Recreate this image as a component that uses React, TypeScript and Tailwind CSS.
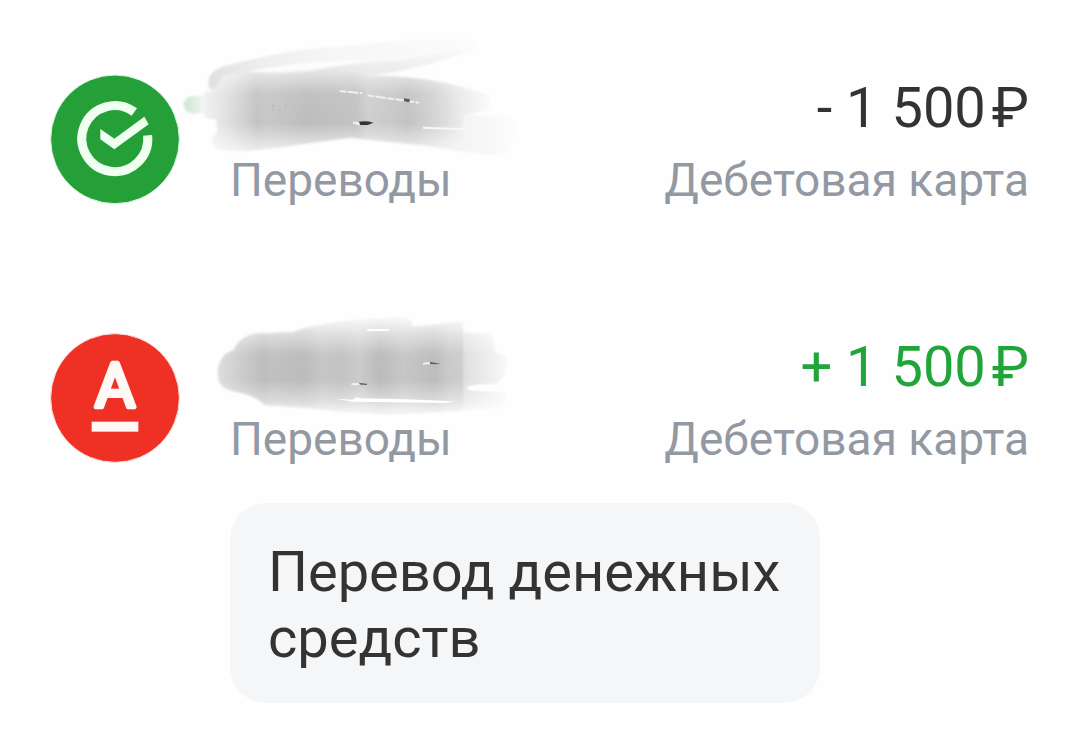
import type { ReactNode } from "react";

function CheckLogo() {
  return (
    <svg viewBox="0 0 450 465" className="size-full" aria-hidden="true">
      <circle cx="225" cy="238" r="193" fill="#25a038" stroke="#dcf8e0" strokeWidth="3" />
      <path d="M283 156A99 99 0 1 0 323 226" fill="none" stroke="#effff0" strokeWidth="27" />
      <path d="M181 207L223 236L313 170L326 193L223 268L181 238Z" fill="#effff0" />
    </svg>
  );
}

function AlfaLogo() {
  return (
    <svg viewBox="0 0 450 465" className="size-full" aria-hidden="true">
      <circle cx="225" cy="237" r="193" fill="#ee3124" stroke="#fbdcd8" strokeWidth="3" />
      <text
        x="225"
        y="263"
        textAnchor="middle"
        fontSize="184"
        className="font-['Roboto'] font-normal"
        fill="#fff9f6"
        stroke="#fff9f6"
        strokeWidth="14"
        strokeLinejoin="round"
      >
        А
      </text>
      <rect x="155" y="308" width="140" height="30" fill="#fff9f6" />
    </svg>
  );
}

function OutgoingSmudge() {
  return (
    <svg
      viewBox="0 0 1050 390"
      className="pointer-events-none absolute -top-[41px] -left-[51px] h-[130px] w-[350px]"
      aria-hidden="true"
    >
      <defs>
        <linearGradient id="outBody" gradientUnits="userSpaceOnUse" x1="70" y1="0" x2="940" y2="0">
          <stop offset="0" stopColor="#f1f2f1" />
          <stop offset="0.1" stopColor="#dcdcdc" />
          <stop offset="0.19" stopColor="#c2c2c2" />
          <stop offset="0.22" stopColor="#c6c6c6" />
          <stop offset="0.36" stopColor="#bcbcbc" />
          <stop offset="0.53" stopColor="#c1c1c1" />
          <stop offset="0.57" stopColor="#cecece" />
          <stop offset="0.65" stopColor="#c8c8c8" />
          <stop offset="0.71" stopColor="#c2c2c2" />
          <stop offset="0.8" stopColor="#d3d3d3" />
          <stop offset="0.9" stopColor="#ececec" />
          <stop offset="1" stopColor="#fcfcfc" />
        </linearGradient>
        <linearGradient id="outShade" x1="0" y1="0" x2="0" y2="1">
          <stop offset="0" stopColor="#fff" stopOpacity="0.6" />
          <stop offset="0.28" stopColor="#fff" stopOpacity="0.08" />
          <stop offset="0.65" stopColor="#fff" stopOpacity="0.02" />
          <stop offset="1" stopColor="#fff" stopOpacity="0.7" />
        </linearGradient>
        <linearGradient id="outTop" x1="0" y1="0" x2="1" y2="0">
          <stop offset="0" stopColor="#e0e0e0" />
          <stop offset="0.2" stopColor="#eeeeee" />
          <stop offset="0.5" stopColor="#f7f7f7" />
          <stop offset="1" stopColor="#fbfbfb" />
        </linearGradient>
        <linearGradient id="outBand" x1="0" y1="1" x2="1" y2="0">
          <stop offset="0" stopColor="#e2e2e2" />
          <stop offset="0.5" stopColor="#efefef" />
          <stop offset="1" stopColor="#fbfbfb" />
        </linearGradient>
        <linearGradient id="outTail" x1="0" y1="0" x2="1" y2="0">
          <stop offset="0" stopColor="#ececec" />
          <stop offset="1" stopColor="#fcfcfc" />
        </linearGradient>
        <linearGradient id="outGreen" x1="0" y1="0" x2="1" y2="0">
          <stop offset="0" stopColor="#cbe8d0" />
          <stop offset="1" stopColor="#f3f6f3" />
        </linearGradient>
        <filter id="outSoft">
          <feGaussianBlur stdDeviation="3" />
        </filter>
      </defs>
      <g filter="url(#outSoft)">
        <path
          d="M92 162C78 125 100 100 160 88C270 60 370 38 510 32C650 14 770 12 888 16Q894 40 884 48C780 84 680 112 560 128L205 130L130 168Z"
          fill="url(#outTop)"
        />
        <path d="M205 111C300 90 400 80 560 74C500 92 440 100 380 103C320 112 290 112 205 111Z" fill="#fdfdfd" />
        <path d="M360 120C440 92 520 88 640 78C720 68 800 50 884 42C780 84 680 108 560 122L450 128Z" fill="url(#outBand)" />
        <path d="M720 230L980 246Q1020 262 1010 290L980 360Q920 364 700 325Z" fill="url(#outTail)" />
        <path
          d="M75 172L105 165L130 125C170 108 240 118 320 116C440 104 500 108 550 122C690 122 780 136 860 158L930 180Q942 204 926 226L852 242L850 338L700 328L515 308C360 326 250 350 130 348Q88 336 102 306L116 290L112 254L78 248Z"
          fill="url(#outBody)"
        />
        <path
          d="M75 172L105 165L130 125C170 108 240 118 320 116C440 104 500 108 550 122C690 122 780 136 860 158L930 180Q942 204 926 226L852 242L850 338L700 328L515 308C360 326 250 350 130 348Q88 336 102 306L116 290L112 254L78 248Z"
          fill="url(#outShade)"
        />
        <path d="M78 182L42 182Q15 186 14 210Q18 236 45 236L78 234Z" fill="url(#outGreen)" />
      </g>
      <path d="M482 168L550 175M565 181L720 203" stroke="#f0f0f0" strokeWidth="6" strokeDasharray="20 4 32 5" />
      <path d="M522 262L542 267" stroke="#f0f0f0" strokeWidth="7" />
      <path d="M732 278L855 283" stroke="#f7f7f7" strokeWidth="6" />
      <path d="M675 194L692 197" stroke="#5c5c5c" strokeWidth="9" />
      <path d="M540 260Q562 256 583 263L566 270H544Z" fill="#333" />
      <path d="M282 210v6m0 8v5m38-21v7m-20 12h5" stroke="#b0b0b0" strokeWidth="3" />
    </svg>
  );
}

function IncomingSmudge() {
  return (
    <svg
      viewBox="0 0 930 360"
      className="pointer-events-none absolute -top-[30px] -left-[21px] h-[120px] w-[310px]"
      aria-hidden="true"
    >
      <defs>
        <linearGradient id="inBody" gradientUnits="userSpaceOnUse" x1="25" y1="0" x2="895" y2="0">
          <stop offset="0" stopColor="#dcdcdc" />
          <stop offset="0.16" stopColor="#bababa" />
          <stop offset="0.19" stopColor="#bebebe" />
          <stop offset="0.3" stopColor="#b9b9b9" />
          <stop offset="0.36" stopColor="#c4c4c4" />
          <stop offset="0.43" stopColor="#c0c0c0" />
          <stop offset="0.49" stopColor="#c9c9c9" />
          <stop offset="0.56" stopColor="#b8b8b8" />
          <stop offset="0.64" stopColor="#c4c4c4" />
          <stop offset="0.75" stopColor="#bababa" />
          <stop offset="0.8" stopColor="#c8c8c8" />
          <stop offset="0.845" stopColor="#cbcbcb" />
          <stop offset="0.85" stopColor="#dedede" />
          <stop offset="1" stopColor="#f9f9f9" />
        </linearGradient>
        <linearGradient id="inShade" x1="0" y1="0" x2="0" y2="1">
          <stop offset="0" stopColor="#fff" stopOpacity="0.9" />
          <stop offset="0.16" stopColor="#fff" stopOpacity="0.5" />
          <stop offset="0.38" stopColor="#fff" stopOpacity="0.06" />
          <stop offset="0.65" stopColor="#fff" stopOpacity="0.04" />
          <stop offset="0.86" stopColor="#fff" stopOpacity="0.45" />
          <stop offset="1" stopColor="#fff" stopOpacity="0.85" />
        </linearGradient>
        <filter id="inSoft">
          <feGaussianBlur stdDeviation="3" />
        </filter>
      </defs>
      <g filter="url(#inSoft)">
        <path
          d="M28 220Q20 175 50 146L74 135Q85 100 135 86L250 82C330 52 470 42 590 40Q612 48 610 66L762 50V82L840 88Q855 95 858 140L892 155V200L866 235L775 246L782 256L888 262V306L720 318L570 326C440 326 340 312 260 306L165 300Q140 270 70 258Q28 246 28 220Z"
          fill="url(#inBody)"
        />
        <path
          d="M28 220Q20 175 50 146L74 135Q85 100 135 86L250 82C330 52 470 42 590 40Q612 48 610 66L762 50V82L840 88Q855 95 858 140L892 155V200L866 235L775 246L782 256L888 262V306L720 318L570 326C440 326 340 312 260 306L165 300Q140 270 70 258Q28 246 28 220Z"
          fill="url(#inShade)"
        />
      </g>
      <path d="M378 281L430 284L442 277L455 280L570 282L740 289L710 294L430 290Z" fill="#fff" />
      <path d="M774 246L805 239L888 240V258L780 255Z" fill="#fefefe" />
      <path d="M474 75L540 75" stroke="#fff" strokeWidth="6" />
      <path d="M427 238L450 237M642 176L664 174" stroke="#f0f0f0" strokeWidth="6" />
      <path d="M449 233L474 236V240L455 239ZM663 170L697 177L676 178L663 177Z" fill="#666" />
    </svg>
  );
}

type TransferProps = {
  logo: ReactNode;
  smudge: ReactNode;
  sign: string;
  amountClass: string;
  note?: string;
};

function Transfer({ logo, smudge, sign, amountClass, note }: TransferProps) {
  return (
    <li className="flex gap-x-10">
      <div className="-mt-4 h-[155px] w-[150px] shrink-0">{logo}</div>
      <div className="min-w-0 grow">
        <div className="flex justify-between">
          <div className="flex flex-col gap-2">
            <div className="relative h-16">{smudge}</div>
            <p className="text-[46px] leading-[64px] text-[#9299a2]">Переводы</p>
          </div>
          <div className="flex flex-col gap-2 text-right">
            <p className={amountClass}>
              {sign} 1 500<span className="ml-1.5">₽</span>
            </p>
            <p className="text-[46px] leading-[64px] text-[#9299a2]">Дебетовая карта</p>
          </div>
        </div>
        {note && (
          <p className="mt-8 w-[590px] max-w-full rounded-[36px] bg-[#f5f6f8] px-[38px] pt-9 pb-8 text-[56px] leading-[66px] text-[#333]">
            {note}
          </p>
        )}
      </div>
    </li>
  );
}

export default function App() {
  return (
    <main className="min-h-screen bg-[#fefefe] pt-[76px] pr-[51px] pb-[29px] pl-10 font-['Roboto',sans-serif]">
      <ul className="flex flex-col gap-[120px]">
        <Transfer
          logo={<CheckLogo />}
          smudge={<OutgoingSmudge />}
          sign="-"
          amountClass="text-[56px] leading-[64px] text-[#333]"
        />
        <Transfer
          logo={<AlfaLogo />}
          smudge={<IncomingSmudge />}
          sign="+"
          amountClass="text-[56px] leading-[64px] text-[#21a53a]"
          note="Перевод денежных средств"
        />
      </ul>
    </main>
  );
}
